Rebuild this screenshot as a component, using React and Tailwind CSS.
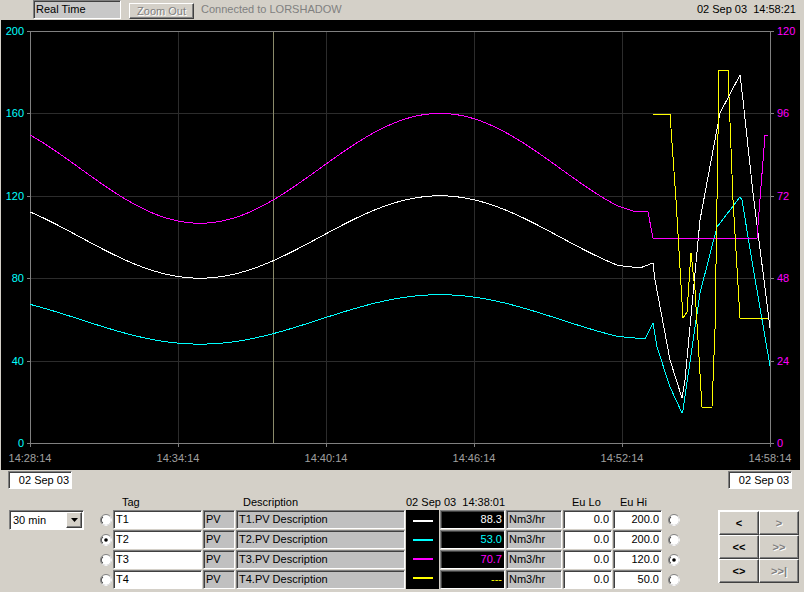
import React from 'react';

const sunken = "border border-t-[#808080] border-l-[#808080] border-b-white border-r-white shadow-[inset_1px_1px_0_#404040]";
const raised = "border border-t-white border-l-white border-b-[#404040] border-r-[#404040] shadow-[inset_-1px_-1px_0_#808080]";

// chart scales
const yLeft = (v) => 443 - v * 412 / 200;
const yRight = (v) => 443 - v * 412 / 120;

const wave = (mid, amp, scale) => {
  const pts = [];
  for (let x = 30; x <= 620; x += 3) {
    pts.push([x, scale(mid - amp * Math.cos((2 * Math.PI * (x - 200)) / 480))]);
  }
  return pts;
};

const traces = [
  {
    color: '#ffffff',
    pts: [...wave(100, 20, yLeft), [640, 268], [653, 263], [655, 280], [670, 360], [682, 398], [685, 380], [700, 220], [720, 113], [740, 75], [743, 100], [753, 193], [770, 328]],
  },
  {
    color: '#00ffff',
    pts: [...wave(60, 12, yLeft), [645, 339], [653, 323], [657, 347], [670, 387], [682, 413], [683, 410], [700, 293], [717, 227], [740, 197], [742, 200], [753, 267], [770, 366]],
  },
  {
    color: '#ff00ff',
    pts: [...wave(80, 16, yRight), [633, 211], [648, 212], [653, 238], [757, 238], [765, 135], [768, 135]],
  },
  {
    color: '#ffff00',
    pts: [[653, 114], [670, 114], [676, 200], [683, 318], [687, 312], [691, 253], [695, 290], [702, 407], [712, 407], [715, 330], [719, 70], [728, 70], [733, 200], [740, 318], [768, 318]],
  },
];

const gridX = [30, 178, 326, 474, 622, 770];
const times = ['14:28:14', '14:34:14', '14:40:14', '14:46:14', '14:52:14', '14:58:14'];
const leftLabels = ['200', '160', '120', '80', '40', '0'];
const rightLabels = ['120', '96', '72', '48', '24', '0'];

const Chart = () => (
  <svg width="799" height="450" viewBox="1 20 799 450" className="block bg-black">
    {[1, 2, 3, 4].map((i) => (
      <line key={'h' + i} x1="30" x2="770" y1={Math.round(31 + i * 82.4) + 0.5} y2={Math.round(31 + i * 82.4) + 0.5} stroke="#2c2c2c" />
    ))}
    {gridX.slice(1, 5).map((x) => (
      <line key={'v' + x} x1={x + 0.5} x2={x + 0.5} y1="31" y2="443" stroke="#2c2c2c" />
    ))}
    <line x1="273.5" x2="273.5" y1="31" y2="443" stroke="#8a8a6a" />
    <rect x="30.5" y="31.5" width="740" height="412" fill="none" stroke="#808080" />
    {leftLabels.map((t, i) => (
      <g key={'l' + t}>
        <line x1="27" x2="30" y1={Math.round(31 + i * 82.4) + 0.5} y2={Math.round(31 + i * 82.4) + 0.5} stroke="#808080" />
        <text x="24" y={35 + i * 82.4} textAnchor="end" fill="#00ffff" fontSize="11">{t}</text>
      </g>
    ))}
    {rightLabels.map((t, i) => (
      <g key={'r' + t}>
        <line x1="771" x2="774" y1={Math.round(31 + i * 82.4) + 0.5} y2={Math.round(31 + i * 82.4) + 0.5} stroke="#808080" />
        <text x="777" y={35 + i * 82.4} fill="#ff00ff" fontSize="11">{t}</text>
      </g>
    ))}
    {gridX.map((x, i) => (
      <g key={'t' + x}>
        <line x1={x + 0.5} x2={x + 0.5} y1="443" y2="447" stroke="#808080" />
        <text x={x} y="462" textAnchor="middle" fill="#a0a0a0" fontSize="11">{times[i]}</text>
      </g>
    ))}
    {traces.map((t) => (
      <polyline key={t.color} points={t.pts.map((p) => p.join(',')).join(' ')} fill="none" stroke={t.color} strokeWidth="1" shapeRendering="crispEdges" />
    ))}
  </svg>
);

const Radio = ({ checked }) => (
  <svg width="12" height="12" viewBox="0 0 12 12">
    <circle cx="6" cy="6" r="5.5" fill="#ffffff" stroke="#808080" />
    <path d="M9.9 2.1 A5.5 5.5 0 0 1 2.1 9.9" fill="none" stroke="#ffffff" />
    <circle cx="6" cy="6" r="4.5" fill="none" stroke="#404040" strokeDasharray="7 30" transform="rotate(135 6 6)" />
    {checked && <circle cx="6" cy="6" r="1.8" fill="#000000" />}
  </svg>
);

const rows = [
  { tag: 'T1', desc: 'T1.PV Description', value: '88.3', color: '#ffffff', lo: '0.0', hi: '200.0', left: false, right: false },
  { tag: 'T2', desc: 'T2.PV Description', value: '53.0', color: '#00ffff', lo: '0.0', hi: '200.0', left: true, right: false },
  { tag: 'T3', desc: 'T3.PV Description', value: '70.7', color: '#ff00ff', lo: '0.0', hi: '120.0', left: false, right: true },
  { tag: 'T4', desc: 'T4.PV Description', value: '---', color: '#ffff00', lo: '0.0', hi: '50.0', left: false, right: false },
];

const navButtons = [
  { label: '<', on: true },
  { label: '>', on: false },
  { label: '<<', on: true },
  { label: '>>', on: false },
  { label: '<>', on: true },
  { label: '>>|', on: false },
];

export default function App() {
  return (
    <div className="w-[804px] h-[592px] bg-[#d4d0c8] overflow-hidden font-['Liberation_Sans',Arial,sans-serif] text-[11px] text-black leading-none">
      {/* top bar */}
      <div className="h-[20px] flex items-start">
        <div className={`ml-[33px] w-[88px] h-[19px] bg-[#c8c8c8] ${sunken} flex items-center pl-[2px]`}>Real Time</div>
        <div className={`ml-[8px] mt-[3px] w-[65px] h-[16px] ${raised} flex items-center justify-center text-[#808080] [text-shadow:1px_1px_0_#fff]`}>Zoom Out</div>
        <div className="ml-[7px] h-[19px] flex items-center text-[#808080]">Connected to LORSHADOW</div>
        <div className="ml-auto mr-[8px] h-[19px] flex items-center whitespace-pre">02 Sep 03  14:58:21</div>
      </div>

      {/* chart */}
      <div className="pl-[1px]">
        <Chart />
      </div>

      {/* bottom panel */}
      <div className="pt-[1px]">
        <div className="flex justify-between pl-[8px] pr-[12px]">
          <div className={`w-[64px] h-[18px] bg-white ${sunken} flex items-center justify-end pr-[2px]`}>02 Sep 03</div>
          <div className={`w-[64px] h-[18px] bg-white ${sunken} flex items-center justify-end pr-[2px]`}>02 Sep 03</div>
        </div>

        <div className="flex mt-[5px]">
          <div className="w-[100px] pl-[9px] pt-[16px]">
            <div className={`w-[75px] h-[20px] bg-white ${sunken} flex items-center justify-between`}>
              <span className="pl-[3px]">30 min</span>
              <div className={`w-[16px] h-[16px] mr-px bg-[#d4d0c8] ${raised} flex items-center justify-center`}>
                <svg width="7" height="4" viewBox="0 0 7 4"><path d="M0 0 H7 L3.5 4 Z" fill="#000" /></svg>
              </div>
            </div>
          </div>

          <div>
            <div className="grid grid-cols-[12px_89px_32px_169px_33px_65px_56px_49px_49px_17px] gap-x-px h-[16px] items-center">
              <div />
              <div className="pl-[9px]">Tag</div>
              <div />
              <div className="pl-[7px]">Description</div>
              <div className="col-span-3 whitespace-pre">02 Sep 03  14:38:01</div>
              <div className="pl-[9px]">Eu Lo</div>
              <div className="pl-[7px]">Eu Hi</div>
              <div />
            </div>
            <div className="grid grid-cols-[12px_89px_32px_169px_33px_65px_56px_49px_49px_17px] grid-rows-[19px_19px_19px_19px] gap-x-px gap-y-px">
              {rows.map((r, i) => (
                <React.Fragment key={r.tag}>
                  <div className="flex items-center" style={{ gridRow: i + 1, gridColumn: 1 }}><Radio checked={r.left} /></div>
                  <div className={`bg-white ${sunken} flex items-center pl-[2px]`} style={{ gridRow: i + 1, gridColumn: 2 }}>{r.tag}</div>
                  <div className={`bg-[#c0c0c0] ${sunken} flex items-center pl-[2px]`} style={{ gridRow: i + 1, gridColumn: 3 }}>PV</div>
                  <div className={`bg-[#c0c0c0] ${sunken} flex items-center pl-[2px]`} style={{ gridRow: i + 1, gridColumn: 4 }}>{r.desc}</div>
                  <div className={`bg-black ${sunken} flex items-center justify-end pr-[2px]`} style={{ gridRow: i + 1, gridColumn: 6, color: r.color }}>{r.value}</div>
                  <div className={`bg-[#c0c0c0] ${sunken} flex items-center pl-[2px]`} style={{ gridRow: i + 1, gridColumn: 7 }}>Nm3/hr</div>
                  <div className={`bg-white ${sunken} flex items-center justify-end pr-[2px]`} style={{ gridRow: i + 1, gridColumn: 8 }}>{r.lo}</div>
                  <div className={`bg-white ${sunken} flex items-center justify-end pr-[2px]`} style={{ gridRow: i + 1, gridColumn: 9 }}>{r.hi}</div>
                  <div className="flex items-center pl-[5px]" style={{ gridRow: i + 1, gridColumn: 10 }}><Radio checked={r.right} /></div>
                </React.Fragment>
              ))}
              <div className="row-span-4 col-start-5 row-start-1 bg-black flex flex-col justify-around items-center py-[2px]">
                {rows.map((r) => (
                  <div key={r.tag} className="w-[20px] h-[2px]" style={{ backgroundColor: r.color }} />
                ))}
              </div>
            </div>
          </div>

          <div className="ml-[38px] pt-[16px]">
            <div className="grid grid-cols-[40px_40px] grid-rows-[24px_24px_24px] border-l border-t border-white">
              {navButtons.map((b) => (
                <div
                  key={b.label}
                  className={`${raised} bg-[#d4d0c8] flex items-center justify-center font-bold ${b.on ? 'text-black' : 'text-[#808080] [text-shadow:1px_1px_0_#fff]'}`}
                >
                  {b.label}
                </div>
              ))}
            </div>
          </div>
        </div>
      </div>
    </div>
  );
}
